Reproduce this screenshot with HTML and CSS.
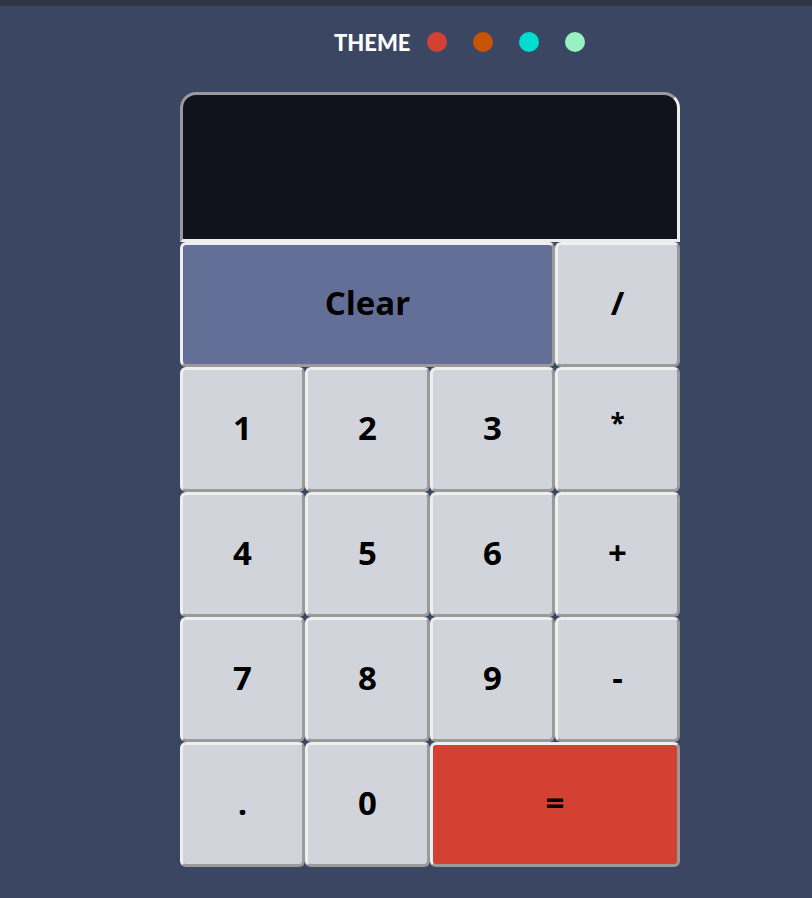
FILE: index.html
```html
<!DOCTYPE html>
<html>
<head>
<meta charset="utf-8">
<link rel="stylesheet" href="styles.css">
</head>
<body>
<div class="topbar"></div>
<header class="theme">
  <span class="theme-label">THEME</span>
  <span class="dot dot-red"></span>
  <span class="dot dot-orange"></span>
  <span class="dot dot-cyan"></span>
  <span class="dot dot-mint"></span>
</header>
<main class="calc">
  <div class="display"></div>
  <div class="keys">
    <button class="key key-clear span3">Clear</button>
    <button class="key">/</button>
    <button class="key">1</button>
    <button class="key">2</button>
    <button class="key">3</button>
    <button class="key key-small">*</button>
    <button class="key">4</button>
    <button class="key">5</button>
    <button class="key">6</button>
    <button class="key">+</button>
    <button class="key">7</button>
    <button class="key">8</button>
    <button class="key">9</button>
    <button class="key">-</button>
    <button class="key">.</button>
    <button class="key">0</button>
    <button class="key key-eq span2">=</button>
  </div>
</main>
</body>
</html>
```
FILE: styles.css
```css
html, body {
  margin: 0;
  padding: 0;
  background: #3b4663;
  font-family: "Lato", "DejaVu Sans", sans-serif;
}
.topbar {
  height: 6px;
  background: #2f3346;
}
.theme {
  display: flex;
  align-items: center;
  height: 74px;
  padding-left: 334px;
  box-sizing: border-box;
  padding-bottom: 2px;
}
.theme-label {
  color: #fff;
  font-weight: 900;
  font-size: 22px;
  margin-right: 16px;
}
.dot {
  width: 20px;
  height: 20px;
  border-radius: 50%;
  margin-right: 26px;
}
.dot-red { background: #d34132; }
.dot-orange { background: #c85402; }
.dot-cyan { background: #00dccf; }
.dot-mint { background: #98f1c0; }
.calc {
  width: 500px;
  margin-left: 180px;
  margin-top: 12px;
}
.display {
  height: 150px;
  box-sizing: border-box;
  background: #10131b;
  border: 3px solid;
  border-color: #9a9a9a #ededed #ededed #9a9a9a;
  border-radius: 16px 16px 0 0;
}
.keys {
  display: grid;
  grid-template-columns: repeat(4, 125px);
  grid-auto-rows: 125px;
}
.key {
  box-sizing: border-box;
  margin: 0;
  border: 3px solid;
  border-color: #efefef #9a9a9a #9a9a9a #efefef;
  border-radius: 6px;
  background: #d1d4da;
  color: #000;
  font-family: "Open Sans", "DejaVu Sans", sans-serif;
  font-weight: 700;
  font-size: 33px;
  padding: 0 0 5px 0;
}
.key-small {
  font-size: 26px;
  padding-bottom: 14px;
}
.span2 { grid-column: span 2; }
.span3 { grid-column: span 3; }
.key-clear { background: #646f98; }
.key-eq { background: #d34132; }
```
